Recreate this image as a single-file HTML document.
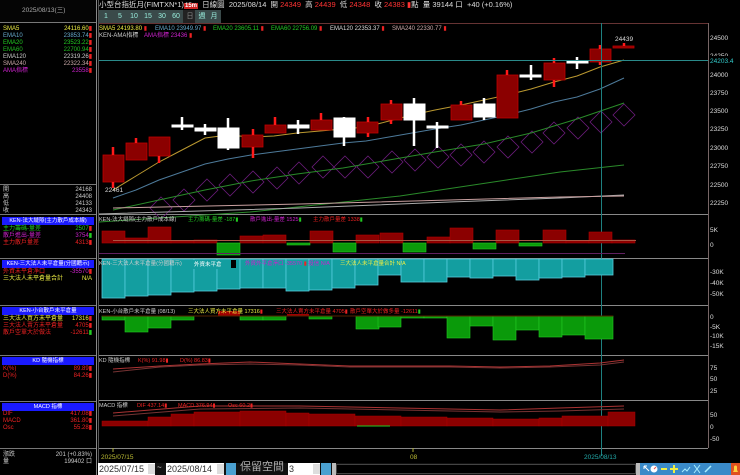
<!DOCTYPE html>
<html><head><meta charset="utf-8"><style>
*{margin:0;padding:0;box-sizing:border-box}
body{width:740px;height:475px;background:#000;overflow:hidden;position:relative;font-family:"Liberation Sans","Noto Sans CJK TC",sans-serif;color:#ddd}
.a{position:absolute;white-space:nowrap;line-height:1}
.s{font-size:7px}
.hd{position:absolute;left:2px;width:92px;height:8px;background:#1a1aff;color:#fff;font-size:5.5px;text-align:center;line-height:8px;overflow:hidden;white-space:nowrap}
.r{position:absolute;left:3px;width:89px;font-size:6px;line-height:7px;white-space:nowrap}
.r span{float:right}
.btn{position:absolute;top:10px;height:13px;width:14px;background:#3a4a4a;color:#9ed;font-size:7px;text-align:center;line-height:13px}
</style></head><body>
<div class="a" style="left:0;top:0;width:96px;height:22px;background:#050505"></div>
<div class="a s" style="left:22px;top:8px;color:#aaa;font-size:6.5px">2025/08/13(三)</div>
<div style="position:absolute;left:0;top:22px;width:96px;height:1px;background:#777"></div>
<div class="r" style="top:26px;color:#ee4">SMA5<span>24116.60<b style="color:#e22">▮</b></span></div>
<div class="r" style="top:33px;color:#6ac">EMA10<span>23853.74<b style="color:#e22">▮</b></span></div>
<div class="r" style="top:40px;color:#2c2">EMA20<span>23523.22<b style="color:#e22">▮</b></span></div>
<div class="r" style="top:47px;color:#2b2">EMA60<span>22700.94<b style="color:#e22">▮</b></span></div>
<div class="r" style="top:54px;color:#ccc">EMA120<span>22319.26<b style="color:#e22">▮</b></span></div>
<div class="r" style="top:61px;color:#caa">SMA240<span>22322.34<b style="color:#e22">▮</b></span></div>
<div class="r" style="top:68px;color:#c2c">AMA指標<span>23558<b style="color:#e22">▮</b></span></div>
<div style="position:absolute;left:0;top:184px;width:96px;height:1px;background:#777"></div>
<div class="r" style="top:187px;color:#ccc">開<span>24168</span></div>
<div class="r" style="top:194px;color:#ccc">高<span>24408</span></div>
<div class="r" style="top:201px;color:#ccc">低<span>24133</span></div>
<div class="r" style="top:208px;color:#ccc">收<span>24343</span></div>
<div style="position:absolute;left:0;top:214px;width:96px;height:1px;background:#777"></div>
<div class="hd" style="top:217px">KEN-法大縫隙(主力散戶成本線)</div>
<div class="r" style="top:226px;color:#2c2">主力籌碼-量差<span>2507<b style="color:#e22">▮</b></span></div>
<div class="r" style="top:233px;color:#c2c">散戶進出-量差<span>3754<b style="color:#2c2">▮</b></span></div>
<div class="r" style="top:240px;color:#e22">主力散戶量差<span>4313<b>▮</b></span></div>
<div style="position:absolute;left:0;top:258px;width:96px;height:1px;background:#777"></div>
<div class="hd" style="top:260px">KEN-三大法人未平倉量(分國籍示)</div>
<div class="r" style="top:269px;color:#e22">外資未平倉淨口<span style="color:#c2c">-35570<b style="color:#e22">▮</b></span></div>
<div class="r" style="top:276px;color:#ee4">三大法人未平倉量合計<span>N/A</span></div>
<div style="position:absolute;left:0;top:305px;width:96px;height:1px;background:#777"></div>
<div class="hd" style="top:307px">KEN-小台散戶未平倉量</div>
<div class="r" style="top:316px;color:#ee4">三大法人買方未平倉量<span>17316<b style="color:#e22">▮</b></span></div>
<div class="r" style="top:323px;color:#e22">三大法人賣方未平倉量<span>4705<b>▮</b></span></div>
<div class="r" style="top:330px;color:#e22">散戶空單大於做法<span>-12611<b style="color:#2c2">▮</b></span></div>
<div style="position:absolute;left:0;top:355px;width:96px;height:1px;background:#777"></div>
<div class="hd" style="top:357px">KD 隨機指標</div>
<div class="r" style="top:366px;color:#e22">K(%)<span>89.89<b>▮</b></span></div>
<div class="r" style="top:373px;color:#e22">D(%)<span>84.26<b>▮</b></span></div>
<div style="position:absolute;left:0;top:401px;width:96px;height:1px;background:#777"></div>
<div class="hd" style="top:403px">MACD 指標</div>
<div class="r" style="top:411px;color:#e22">DIF<span>417.08<b>▮</b></span></div>
<div class="r" style="top:418px;color:#e22">MACD<span>361.80<b>▮</b></span></div>
<div class="r" style="top:425px;color:#e22">Osc<span>55.28<b>▮</b></span></div>
<div style="position:absolute;left:0;top:448px;width:96px;height:1px;background:#777"></div>
<div class="r" style="top:452px;color:#ccc">漲跌<span>201 (+0.83%)</span></div>
<div class="r" style="top:459px;color:#ccc">量<span>199402 口</span></div>
<div style="position:absolute;left:96px;top:0;width:1px;height:475px;background:#888"></div>
<div style="position:absolute;left:98px;top:0;width:1px;height:475px;background:#555"></div>

<div class="a" style="left:99px;top:1px;font-size:7.5px;color:#ddd">小型台指近月(FIMTXN*1)<b style="background:#c22;color:#fff;font-size:6px;padding:0 1px">15m</b>&nbsp; 日線圖&nbsp; 2025/08/14&nbsp; 開 <span style="color:#f33">24349</span>&nbsp; 高 <span style="color:#f33">24439</span>&nbsp; 低 <span style="color:#f33">24348</span>&nbsp; 收 <span style="color:#f33">24383</span> <span style="color:#f33">▮</span>點&nbsp; 量 39144 口&nbsp; +40 (+0.16%)</div>
<div class="btn" style="left:99px">1</div><div class="btn" style="left:113px">5</div><div class="btn" style="left:127px">10</div><div class="btn" style="left:141px">15</div><div class="btn" style="left:155px">30</div><div class="btn" style="left:169px">60</div><div class="btn" style="left:183px;background:#222;color:#888">日</div><div class="btn" style="left:195px">週</div><div class="btn" style="left:207px">月</div>

<svg style="position:absolute;left:0;top:0" width="740" height="475" font-family="Liberation Sans, Noto Sans CJK TC, sans-serif">
<line x1="99" y1="23.5" x2="708" y2="23.5" stroke="#633" />
<line x1="708.5" y1="23" x2="708.5" y2="448" stroke="#766"/>
<g stroke="#888"><line x1="99" y1="214.5" x2="708" y2="214.5"/><line x1="99" y1="258.5" x2="708" y2="258.5"/><line x1="99" y1="305.5" x2="708" y2="305.5"/><line x1="99" y1="355.5" x2="708" y2="355.5"/><line x1="99" y1="400.5" x2="708" y2="400.5"/><line x1="99" y1="448.5" x2="708" y2="448.5"/></g>
<g font-size="6">
<text x="99" y="30" fill="#ee4">SMA5 24193.80 <tspan fill="#e22">▮</tspan></text>
<text x="155" y="30" fill="#6ac">EMA10 23949.97 <tspan fill="#e22">▮</tspan></text>
<text x="213" y="30" fill="#2c2">EMA20 23605.11 <tspan fill="#e22">▮</tspan></text>
<text x="271" y="30" fill="#2c2">EMA60 22756.09 <tspan fill="#e22">▮</tspan></text>
<text x="330" y="30" fill="#ddd">EMA120 22353.37 <tspan fill="#e22">▮</tspan></text>
<text x="392" y="30" fill="#caa">SMA240 22330.77 <tspan fill="#e22">▮</tspan></text>
<text x="99" y="37" fill="#ccc">KEN-AMA指標</text>
<text x="144" y="37" fill="#c2c">AMA指標 23436 <tspan fill="#e22">▮</tspan></text>
</g>
<g fill="none" stroke="#6a1c7a" stroke-width="0.8">
<path d="M161 197l11 11-11 11-11-11z"/><path d="M184 189l11 11-11 11-11-11z"/><path d="M207 179l11 11-11 11-11-11z"/><path d="M230 174l11 11-11 11-11-11z"/><path d="M253 171l11 11-11 11-11-11z"/><path d="M277 167l11 11-11 11-11-11z"/><path d="M299 162l11 11-11 11-11-11z"/><path d="M323 156l11 11-11 11-11-11z"/><path d="M345 156l11 11-11 11-11-11z"/><path d="M368 156l11 11-11 11-11-11z"/><path d="M392 151l11 11-11 11-11-11z"/><path d="M415 149l11 11-11 11-11-11z"/><path d="M438 146l11 11-11 11-11-11z"/><path d="M461 144l11 11-11 11-11-11z"/><path d="M484 141l11 11-11 11-11-11z"/><path d="M508 136l11 11-11 11-11-11z"/><path d="M532 131l11 11-11 11-11-11z"/><path d="M554 122l11 11-11 11-11-11z"/><path d="M578 117l11 11-11 11-11-11z"/><path d="M601 111l11 11-11 11-11-11z"/><path d="M624 104l11 11-11 11-11-11z"/>
</g>
<polyline fill="none" stroke="#bb9930" points="113,190 136,176 159,162 182,150 205,138 228,135 251,137 274,136 297,133 320,131 343,129 366,127 389,121 412,115 435,110 461,105 484,100 507,95 531,89 554,82 577,76 600,67 624,60"/>
<polyline fill="none" stroke="#4d7a9a" points="113,198 136,190 159,180 182,172 205,164 228,159 251,155 274,152 297,149 320,146 343,143 366,141 389,137 412,133 435,129 461,125 484,120 507,115 531,109 554,102 577,97 600,89 624,78"/>
<polyline fill="none" stroke="#2a8a2a" points="113,210 159,200 205,190 251,181 297,174 343,168 389,160 435,152 484,144 531,133 577,119 624,103"/>
<polyline fill="none" stroke="#2a8a2a" points="99,222 250,212 400,196 500,181 560,172 624,165"/>
<polyline fill="none" stroke="#aaa" points="99,214 300,208 450,202 560,198 624,195"/>
<polyline fill="none" stroke="#c9a0a0" points="113,208 300,204 450,200 560,197 624,196"/>
<g fill="#8b0000" stroke="#c00000" stroke-width="0.8">
<rect x="103" y="155" width="21" height="27"/><rect x="126" y="143" width="21" height="17"/><rect x="149" y="137" width="21" height="19"/>
<rect x="242" y="135" width="21" height="12"/><rect x="265" y="125" width="21" height="8"/><rect x="311" y="120" width="21" height="10"/><rect x="357" y="122" width="21" height="11"/><rect x="381" y="104" width="21" height="16"/><rect x="451" y="105" width="21" height="15"/><rect x="497" y="75" width="21" height="43"/><rect x="544" y="63" width="21" height="17"/><rect x="590" y="49" width="21" height="13"/><rect x="613" y="46" width="21" height="2"/>
</g>
<g stroke="#ff1a1a" stroke-width="2.5">
<line x1="113" y1="147" x2="113" y2="155"/><line x1="113" y1="182" x2="113" y2="188"/><line x1="136" y1="138" x2="136" y2="143"/><line x1="159" y1="156" x2="159" y2="163"/><line x1="253" y1="129" x2="253" y2="135"/><line x1="253" y1="147" x2="253" y2="158"/><line x1="275" y1="117" x2="275" y2="125"/><line x1="321" y1="113" x2="321" y2="120"/><line x1="368" y1="117" x2="368" y2="122"/><line x1="368" y1="133" x2="368" y2="137"/><line x1="391" y1="100" x2="391" y2="104"/><line x1="391" y1="120" x2="391" y2="124"/><line x1="461" y1="101" x2="461" y2="105"/><line x1="507" y1="70" x2="507" y2="75"/><line x1="554" y1="58" x2="554" y2="63"/><line x1="554" y1="80" x2="554" y2="87"/><line x1="600" y1="45" x2="600" y2="49"/><line x1="600" y1="62" x2="600" y2="65"/><line x1="624" y1="43" x2="624" y2="46"/>
</g>
<g fill="#fff" stroke="#fff" stroke-width="2.5">
<rect x="172" y="125" width="21" height="2" stroke-width="1"/><line x1="182" y1="117" x2="182" y2="130"/>
<rect x="195" y="128" width="21" height="3" stroke-width="1"/><line x1="205" y1="124" x2="205" y2="135"/>
<rect x="218" y="128" width="21" height="20" stroke-width="1"/><line x1="228" y1="118" x2="228" y2="150"/>
<rect x="288" y="125" width="21" height="3" stroke-width="1"/><line x1="298" y1="120" x2="298" y2="134"/>
<rect x="334" y="118" width="21" height="19" stroke-width="1"/><line x1="344" y1="117" x2="344" y2="146"/>
<rect x="404" y="104" width="21" height="16" stroke-width="1"/><line x1="414" y1="98" x2="414" y2="146"/>
<rect x="427" y="126" width="21" height="2" stroke-width="1"/><line x1="437" y1="122" x2="437" y2="148"/>
<rect x="474" y="104" width="21" height="13" stroke-width="1"/><line x1="484" y1="98" x2="484" y2="120"/>
<rect x="520" y="75" width="21" height="2" stroke-width="1"/><line x1="531" y1="65" x2="531" y2="80"/>
<rect x="567" y="61" width="21" height="2" stroke-width="1"/><line x1="577" y1="57" x2="577" y2="69"/>
</g>
<text x="105" y="192" font-size="6.5" fill="#ddd">22461</text>
<text x="615" y="41" font-size="6.5" fill="#ddd">24439</text>
<line x1="99" y1="60.5" x2="708" y2="60.5" stroke="#2a8a8a"/>
<line x1="601.5" y1="23" x2="601.5" y2="456" stroke="#1e8080"/>
<g fill="#8b0000" stroke="#b00000" stroke-width="0.6">
<rect x="102" y="231" width="23" height="12"/><rect x="125" y="238" width="23" height="5"/><rect x="148" y="227" width="23" height="16"/><rect x="171" y="241" width="23" height="2"/><rect x="194" y="240" width="23" height="3"/><rect x="240" y="236" width="23" height="7"/><rect x="263" y="235" width="23" height="8"/><rect x="310" y="231" width="23" height="12"/><rect x="356" y="235" width="23" height="8"/><rect x="380" y="233" width="23" height="10"/><rect x="427" y="237" width="23" height="6"/><rect x="450" y="228" width="23" height="15"/><rect x="496" y="230" width="23" height="13"/><rect x="543" y="230" width="23" height="13"/><rect x="566" y="241" width="23" height="2"/><rect x="589" y="232" width="23" height="11"/><rect x="612" y="240" width="23" height="3"/>
</g>
<g fill="#0a9a0a" stroke="#2c2" stroke-width="0.6">
<rect x="217" y="243" width="23" height="12"/><rect x="287" y="243" width="23" height="2"/><rect x="333" y="243" width="23" height="9"/><rect x="403" y="243" width="23" height="9"/><rect x="473" y="243" width="23" height="6"/><rect x="519" y="243" width="23" height="3"/>
</g>
<line x1="113" y1="240.5" x2="636" y2="240.5" stroke="#a54" stroke-width="1"/>
<line x1="99" y1="253.5" x2="625" y2="253.5" stroke="#602060"/>
<g font-size="5.5"><text x="99" y="221" fill="#ccc">KEN-法大縫隙(主力散戶成本線)</text><text x="188" y="221" fill="#2c2">主力籌碼-量差 -187<tspan>▮</tspan></text><text x="250" y="221" fill="#c2c">散戶進出-量差 1525<tspan fill="#2c2">▮</tspan></text><text x="313" y="221" fill="#e22">主力散戶量差 1338<tspan fill="#2c2">▮</tspan></text></g>
<g fill="#139ea0" stroke="#5cd" stroke-width="0.8">
<rect x="102" y="259" width="23" height="39"/><rect x="125" y="259" width="23" height="37"/><rect x="148" y="259" width="23" height="36"/><rect x="171" y="259" width="23" height="33"/><rect x="194" y="259" width="23" height="32"/><rect x="217" y="259" width="23" height="30"/><rect x="240" y="259" width="23" height="29"/><rect x="263" y="259" width="23" height="29"/><rect x="286" y="259" width="23" height="32"/><rect x="309" y="259" width="23" height="31"/><rect x="332" y="259" width="23" height="29"/><rect x="355" y="259" width="23" height="26"/><rect x="378" y="259" width="23" height="16"/><rect x="401" y="259" width="23" height="23"/><rect x="424" y="259" width="23" height="23"/><rect x="447" y="259" width="23" height="18"/><rect x="470" y="259" width="23" height="19"/><rect x="493" y="259" width="23" height="17"/><rect x="516" y="259" width="23" height="21"/><rect x="539" y="259" width="23" height="19"/><rect x="562" y="259" width="23" height="18"/><rect x="585" y="259" width="28" height="16"/>
</g>
<g font-size="5.5"><text x="99" y="265" fill="#ccc">KEN-三大法人未平倉量(分國籍示)</text><rect x="192" y="260" width="44" height="9" fill="#139ea0"/><text x="194" y="266" fill="#fff">外資未平倉</text><rect x="231" y="260" width="5" height="8" fill="#000"/><text x="245" y="265" fill="#c2c">外資外平倉淨口 -35570 <tspan fill="#e22">▮</tspan> 投信 N/A</text><text x="340" y="265" fill="#ee4">三大法人未平倉量合計 N/A</text></g>
<g fill="#0a9a0a" stroke="#2c2" stroke-width="0.6">
<rect x="102" y="316" width="23" height="4"/><rect x="125" y="316" width="23" height="16"/><rect x="148" y="316" width="23" height="12"/><rect x="171" y="316" width="23" height="4"/><rect x="240" y="316" width="23" height="4"/><rect x="263" y="316" width="23" height="4"/><rect x="309" y="316" width="23" height="3"/><rect x="356" y="316" width="23" height="13"/><rect x="378" y="316" width="23" height="11"/><rect x="401" y="316" width="23" height="2"/><rect x="424" y="316" width="23" height="2"/><rect x="447" y="316" width="23" height="22"/><rect x="470" y="316" width="23" height="10"/><rect x="493" y="316" width="23" height="24"/><rect x="516" y="316" width="23" height="14"/><rect x="539" y="316" width="23" height="21"/><rect x="562" y="316" width="23" height="19"/><rect x="585" y="316" width="28" height="23"/>
</g>
<rect x="218" y="311" width="22" height="5" fill="#a00000"/><rect x="287" y="314" width="22" height="2" fill="#a00000"/>
<line x1="102" y1="316" x2="613" y2="316" stroke="#520"/>
<g font-size="5.5"><text x="99" y="313" fill="#ccc">KEN-小台散戶未平倉量 (08/13)</text><text x="188" y="313" fill="#ee4">三大法人買方未平倉量 17316<tspan fill="#e22">▮</tspan></text><text x="276" y="313" fill="#e22">三大法人賣方未平倉量 4705<tspan>▮</tspan></text><text x="350" y="313" fill="#e22">散戶空單大於做多量 -12611<tspan fill="#2c2">▮</tspan></text></g>
<polyline fill="none" stroke="#a33" points="113,369 160,366 200,364 250,362 300,364 350,366 400,366 450,366 500,367 550,366 600,363 624,360"/>
<polyline fill="none" stroke="#733" points="113,372 160,367 200,365 250,364 300,365 350,367 400,367 450,367 500,368 550,367 600,365 624,362"/>
<g font-size="5.5"><text x="99" y="362" fill="#ccc">KD 隨機指標</text><text x="138" y="362" fill="#e22">K(%) 91.98<tspan>▮</tspan></text><text x="180" y="362" fill="#e22">D(%) 86.83<tspan>▮</tspan></text></g>
<g fill="#8b0000" stroke="#a00" stroke-width="0.5">
<rect x="102" y="421" width="46" height="5"/><rect x="148" y="417" width="23" height="9"/><rect x="171" y="414" width="23" height="12"/><rect x="194" y="412" width="46" height="14"/><rect x="240" y="411" width="46" height="15"/><rect x="286" y="413" width="23" height="13"/><rect x="309" y="414" width="46" height="12"/><rect x="355" y="416" width="46" height="10"/><rect x="401" y="417" width="46" height="9"/><rect x="447" y="418" width="46" height="8"/><rect x="493" y="419" width="46" height="7"/><rect x="539" y="418" width="23" height="8"/><rect x="562" y="416" width="46" height="10"/><rect x="608" y="412" width="27" height="14"/>
</g>
<line x1="357" y1="426" x2="390" y2="426" stroke="#2c2"/>
<polyline fill="none" stroke="#a33" points="113,413 200,406 300,406 400,408 500,410 560,408 624,406"/>
<polyline fill="none" stroke="#733" points="113,416 200,409 300,408 400,410 500,412 560,411 624,409"/>
<g font-size="5.5"><text x="99" y="407" fill="#ccc">MACD 指標</text><text x="137" y="407" fill="#e22">DIF 437.14<tspan>▮</tspan></text><text x="178" y="407" fill="#e22">MACD 376.94<tspan>▮</tspan></text><text x="228" y="407" fill="#e22">Osc 60.2<tspan>▮</tspan></text></g>
<g font-size="6.5" fill="#ddd">
<text x="710" y="40">24500</text><text x="710" y="58">24250</text><text x="710" y="77">24000</text><text x="710" y="95">23750</text><text x="710" y="113">23500</text><text x="710" y="131">23250</text><text x="710" y="150">23000</text><text x="710" y="168">22750</text><text x="710" y="187">22500</text><text x="710" y="205">22250</text>
<text x="710" y="232">5K</text><text x="710" y="247">0</text>
<text x="710" y="274">-30K</text><text x="710" y="285">-40K</text><text x="710" y="296">-50K</text>
<text x="710" y="319">0</text><text x="710" y="329">-5K</text><text x="710" y="338">-10K</text><text x="710" y="348">-15K</text>
<text x="710" y="370">75</text><text x="710" y="381">50</text><text x="710" y="393">25</text>
<text x="710" y="417">50</text><text x="710" y="429">0</text><text x="710" y="441">-50</text>
</g>
<rect x="709" y="56" width="31" height="8" fill="#000"/><text x="710" y="63" font-size="6.5" fill="#3cc">24203.4</text>
<line x1="113" y1="448" x2="113" y2="452" stroke="#aa3"/><line x1="413" y1="448" x2="413" y2="452" stroke="#aa3"/>
<g font-size="6.5"><text x="101" y="459" fill="#bb3">2025/07/15</text><text x="410" y="459" fill="#bb3">08</text><text x="584" y="459" fill="#2aa">2025/08/13</text></g>
<!-- bottom right icons -->
<g>
<rect x="640" y="463" width="91" height="12" fill="#3a8ac8"/>
<path d="M644 466l5 5M644 466h3M644 466v3" stroke="#fff" stroke-width="1" fill="none"/>
<circle cx="654" cy="469" r="3.5" fill="#fff"/><path d="M654 469l2-2" stroke="#e55"/>
<rect x="661" y="468" width="6" height="2" fill="#ee4"/>
<path d="M674 465v8M670 469h8" stroke="#ee4" stroke-width="2"/>
<path d="M682 472l3-3 2 2 3-4" stroke="#aef" fill="none"/>
<path d="M694 465l6 8M700 465l-6 8" stroke="#aef"/>
<path d="M705 472l6-6" stroke="#aef" stroke-width="1.5"/>
<rect x="716" y="463" width="14" height="12" fill="#3a8ac8"/>
<rect x="731" y="463" width="9" height="12" fill="#e05020"/>
<path d="M733 472h5l-1-2v-3a1.5 1.5 0 0 0-3 0v3z" fill="#ffd040"/>
</g>
</svg>

<div class="a" style="left:98px;top:463px;width:542px;height:12px;background:#111"></div>
<div class="a" style="left:98px;top:463px;width:57px;height:12px;background:#fff;color:#333;font-size:9px;line-height:12px;padding-left:1px">2025/07/15</div>
<div class="a" style="left:148px;top:464px;width:7px;height:10px;background:#ddd"></div>
<div class="a" style="left:157px;top:464px;color:#ccc;font-size:8px">~</div>
<div class="a" style="left:166px;top:463px;width:58px;height:12px;background:#fff;color:#333;font-size:9px;line-height:12px;padding-left:1px">2025/08/14</div>
<div class="a" style="left:217px;top:464px;width:7px;height:10px;background:#ddd"></div>
<div class="a" style="left:226px;top:463px;width:10px;height:12px;background:#4aa0d0"></div>
<div class="a" style="left:240px;top:462px;color:#aaa;font-size:11px">保留空間</div>
<div class="a" style="left:288px;top:463px;width:32px;height:12px;background:#fff;color:#333;font-size:9px;line-height:12px;padding-left:1px">3</div>
<div class="a" style="left:313px;top:464px;width:7px;height:10px;background:#ddd"></div>
<div class="a" style="left:321px;top:463px;width:10px;height:12px;background:#4aa0d0"></div>
<div class="a" style="left:332px;top:463px;width:4px;height:12px;background:#bbb"></div>
<div class="a" style="left:336px;top:464px;width:300px;height:10px;background:#000;border:1px solid #444"></div>
<div class="a" style="left:636px;top:463px;width:4px;height:12px;background:#bbb"></div>
</body></html>
